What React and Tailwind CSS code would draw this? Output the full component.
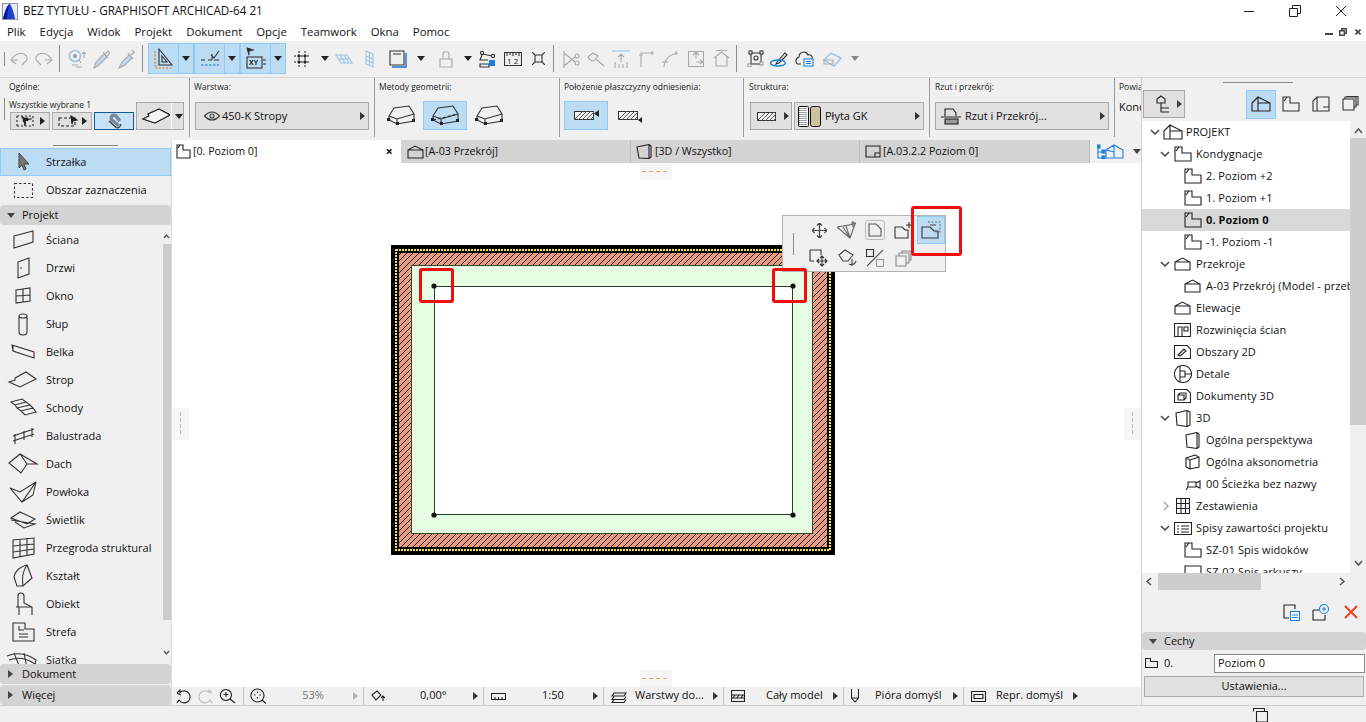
import React from 'react'

const Ico = ({ w, h, c = '#333', sw = 1.1, d, className = '', children }) => (
  <svg width={w} height={h} viewBox={`0 0 ${w} ${h}`} fill="none" stroke={c} strokeWidth={sw} className={`shrink-0 ${className}`}>
    {d && <path d={d} />}
    {children}
  </svg>
)

const CaretR = ({ c = '#333', className = '' }) => (
  <svg width="5" height="8" viewBox="0 0 5 8" className={`shrink-0 ${className}`}><path d="M0 0L5 4L0 8Z" fill={c} /></svg>
)
const CaretD = ({ c = '#333', className = '' }) => (
  <svg width="8" height="5" viewBox="0 0 8 5" className={`shrink-0 ${className}`}><path d="M0 0H8L4 5Z" fill={c} /></svg>
)
const Sep = ({ className = '' }) => <div className={`w-px shrink-0 bg-[#8a8a8a] ${className}`} />

const GRAY = '#a9a9a9'
const LBLUE = '#9cc3e6'

function TopBars() {
  return (
    <>
      <div className="h-[22px] bg-white flex items-center">
        <svg width="16" height="17" viewBox="0 0 16 17" className="ml-[2px] shrink-0">
          <rect x="0" y="0" width="16" height="17" fill="#8d97a8" />
          <rect x="1" y="1" width="14" height="15" fill="#e8ecf4" />
          <path d="M1 16C3 8 5 2 8 1C10 4 12 10 13 16Z" fill="#1f3fd0" />
          <path d="M8 1C6 5 5 11 5 16H1C3 8 5 2 8 1Z" fill="#0a1f8a" />
        </svg>
        <span className="ml-[5px] text-[11.7px] text-[#111]">BEZ TYTUŁU - GRAPHISOFT ARCHICAD-64 21</span>
        <div className="ml-auto flex items-center">
          <div className="w-[10px] h-px bg-[#222]" />
          <Ico w={12} h={12} c="#222" sw={1} className="ml-[35px]" d="M0.5 3.5H8.5V11.5H0.5ZM3.5 3.5V0.5H11.5V8.5H8.5" />
          <Ico w={12} h={12} c="#222" sw={1} className="ml-[34px] mr-[19px]" d="M1 1L11 11M11 1L1 11" />
        </div>
      </div>
      <div className="h-[19px] bg-white flex items-center text-[11.4px] text-[#111] pl-[7px]">
        <span>Plik</span>
        <span className="ml-[14px]">Edycja</span>
        <span className="ml-[14px]">Widok</span>
        <span className="ml-[14px]">Projekt</span>
        <span className="ml-[14px]">Dokument</span>
        <span className="ml-[14px]">Opcje</span>
        <span className="ml-[14px]">Teamwork</span>
        <span className="ml-[14px]">Okna</span>
        <span className="ml-[14px]">Pomoc</span>
        <div className="ml-auto flex items-end mr-[5px]">
          <div className="w-[8px] h-[2px] bg-[#444] mb-px" />
          <Ico w={8} h={8} c="#444" sw={1.4} className="ml-[6px]" d="M0.7 2.7H5.3V7.3H0.7ZM2.7 2V0.7H7.3V5.3H6" />
          <Ico w={6} h={6} c="#444" sw={1.6} className="ml-[8px] mb-px" d="M0.5 0.5L5.5 5.5M5.5 0.5L0.5 5.5" />
        </div>
      </div>
    </>
  )
}

const BlueBtn = ({ children }) => (
  <>
    <div className="w-[31px] h-[31px] bg-[#bcdcf4] border border-[#90c8f6] flex items-center justify-center">{children}</div>
    <div className="w-[15px] h-[31px] bg-[#bcdcf4] border-y border-r border-[#90c8f6] flex items-center justify-center"><CaretD c="#222" /></div>
  </>
)

function Toolbar() {
  return (
    <div className="h-[37px] bg-[#f0f0f0] border-b border-[#d4d4d4] flex items-center pb-px">
      <Sep className="ml-[4px] h-[14px]" />
      <Ico w={18} h={14} c={GRAY} className="ml-[5px]" d="M1 8Q7 -1 14 2Q19 5 16 9L12 13M1 8L6 12M1 8H8" />
      <Ico w={18} h={14} c={GRAY} className="ml-[7px]" d="M17 8Q11 -1 4 2Q-1 5 2 9L6 13M17 8L12 12M17 8H10" />
      <Sep className="ml-[6px] h-[27px]" />
      <Ico w={18} h={20} c={GRAY} className="ml-[8px]" >
        <circle cx="7" cy="7" r="5.5" stroke={LBLUE} strokeWidth="1.6" />
        <circle cx="7" cy="7" r="2" fill="#999" stroke="none" />
        <path d="M11 11L13 14M16 3V9M14 5L16 3L18 5M4 16H10M8 18H14" />
      </Ico>
      <Ico w={17} h={20} c={GRAY} className="ml-[7px]" >
        <path d="M1 19L3 13L11 5L14 8L6 16Z" fill="#c2d8ee" />
        <path d="M10 3L15 9M12 5L15 2L17 4L14 7" />
      </Ico>
      <Ico w={17} h={20} c={GRAY} className="ml-[8px]">
        <path d="M1 19L4 13L11 6L14 9L7 16Z" fill="#c2d8ee" />
        <path d="M10 4L15 10M13 6L16 3M14 1L17 4" />
      </Ico>
      <Sep className="ml-[7px] h-[27px]" />
      <div className="ml-[5px] flex">
        <BlueBtn>
          <Ico w={20} h={24} c="#333">
            <path d="M5 2L18 18H5ZM8 9L13 15H8Z" />
            <path d="M1 4V21H19" stroke="#f07a10" strokeWidth="1.2" strokeDasharray="2 1.5" />
          </Ico>
        </BlueBtn>
        <BlueBtn>
          <Ico w={20} h={20} c="#333">
            <path d="M1 11H5M8 11H12M11 6L14 9L19 2M14 11H19M12 5V11" />
            <path d="M1 16H19" stroke="#1a6fd4" strokeDasharray="2.5 1.5" />
          </Ico>
        </BlueBtn>
        <BlueBtn>
          <Ico w={20} h={24} c="#333">
            <path d="M1 1L7 3L3 4L3 8Z" fill="#222" />
            <rect x="1" y="10" width="15" height="11" />
            <path d="M17 13H20M17 17H20" />
            <text x="3" y="18" fontSize="7" fontWeight="700" fill="#222" stroke="none">XY</text>
          </Ico>
        </BlueBtn>
      </div>
      <Ico w={17} h={18} c="#222" sw={1} className="ml-[7px]">
        <path d="M1 6H3M8 6H10M14 6H16M1 12H3M8 12H10M14 12H16M6 1V3M6 8V10M6 15V17M12 1V3M12 8V10M12 15V17" />
        <circle cx="6" cy="6" r="1.2" fill="#222" /><circle cx="12" cy="6" r="1.2" fill="#222" />
        <circle cx="6" cy="12" r="1.2" fill="#222" /><circle cx="12" cy="12" r="1.2" fill="#222" />
      </Ico>
      <CaretD c="#222" className="ml-[11px]" />
      <Ico w={18} h={10} c={LBLUE} className="ml-[6px]" d="M1 1H12L17 9H6ZM5 1L10 9M9 1L14 9M3 5H14" />
      <Ico w={9} h={18} c={LBLUE} className="ml-[12px]" d="M1 1L8 4V17L1 14ZM4.5 3V16M1 6L8 9M1 10L8 13" />
      <Ico w={18} h={18} c="#333" className="ml-[15px]" >
        <path d="M1 1H15V15H1ZM4 4H12" />
        <path d="M3 17H17V3" stroke="#1a6fd4" strokeWidth="1.4" />
      </Ico>
      <CaretD c="#222" className="ml-[10px]" />
      <Ico w={14} h={18} c={GRAY} className="ml-[14px]" d="M1 9H13V17H1ZM4 9V4C4 1 10 1 10 4V9" />
      <CaretD c="#222" className="ml-[11px]" />
      <Ico w={18} h={18} c="#333" className="ml-[7px]">
        <circle cx="3" cy="3" r="1.6" /><circle cx="14" cy="6" r="1.6" />
        <path d="M4 4L13 6M3 5L1 10H9M1 14H10V17H1Z" />
        <rect x="10" y="10" width="6" height="6" fill="#1a7fe0" stroke="none" />
      </Ico>
      <Ico w={18} h={14} c="#333" className="ml-[7px]" d="M0.5 0.5H17.5V13.5H0.5ZM3 1V4M6 1V3M9 1V4M12 1V3M15 1V4">
        <text x="3" y="12" fontSize="8" fill="#222" stroke="none">1 2</text>
      </Ico>
      <Ico w={13} h={13} c="#333" className="ml-[10px]" d="M3 3H10V10H3ZM0 0L3 3M13 0L10 3M0 13L3 10M13 13L10 10" />
      <Sep className="ml-[8px] h-[27px]" />
      <Ico w={17} h={18} c={GRAY} className="ml-[9px]" >
        <circle cx="14" cy="6" r="2" /><circle cx="14" cy="13" r="2" />
        <path d="M1 3L12 12M1 16L12 7M1 1V18" />
      </Ico>
      <Ico w={18} h={16} c={GRAY} className="ml-[7px]" d="M1 6L6 2L11 5L7 10Q3 10 1 6ZM9 8L17 15" />
      <Ico w={18} h={18} c={GRAY} className="ml-[7px]">
        <path d="M0 1H18" stroke={LBLUE} />
        <path d="M9 4V12M6 7L9 4L12 7M3 12V18M7 14V18M11 14V18M15 12V18" />
      </Ico>
      <Ico w={15} h={16} c={GRAY} className="ml-[9px]" d="M2 16V2H15M13 0V4M0 4H4" />
      <Ico w={18} h={16} c={GRAY} className="ml-[8px]" d="M2 16Q3 4 16 2M14 0V4M0 11H6" />
      <Ico w={16} h={16} c={GRAY} className="ml-[8px]" d="M0.5 0.5H15.5V15.5H0.5ZM8 1V8M5 4L8 1L11 4M8 11H15M12 9L15 11L12 13" />
      <Ico w={17} h={17} c={GRAY} className="ml-[9px]" d="M1 8L8.5 2L16 8M3 7V16H14V7M3 0.5H14" />
      <Sep className="ml-[6px] h-[27px]" />
      <Ico w={17} h={17} c="#333" className="ml-[10px]">
        <path d="M4 3H14V14H4Z" />
        <rect x="2" y="1" width="3" height="3" fill="#fff" /><rect x="13" y="1" width="3" height="3" fill="#fff" />
        <rect x="13" y="12" width="3" height="3" fill="#fff" stroke="#999" /><rect x="1" y="14" width="3" height="3" fill="#fff" stroke="#999" />
        <circle cx="9" cy="8" r="2" />
      </Ico>
      <Ico w={18} h={16} c="#333" className="ml-[6px]">
        <path d="M7 11L15 2L17 4L9 12L6 13Z" />
        <ellipse cx="8" cy="12" rx="7.5" ry="3" stroke="#1a7fe0" strokeWidth="1.4" />
      </Ico>
      <Ico w={19} h={17} c="#333" className="ml-[7px]">
        <path d="M6 14H4C0 14 0 8 4 7C4 2 11 0 13 5C16 4 18 7 17 9" />
        <rect x="9" y="9" width="9" height="7" fill="#fff" stroke="#1a7fe0" />
        <path d="M11 11.5H16M11 13.5H16" stroke="#1a7fe0" />
      </Ico>
      <Ico w={19} h={17} c={GRAY} className="ml-[9px]">
        <path d="M1 10L8 3L18 8L11 16Z" stroke={LBLUE} strokeWidth="1.4" />
        <path d="M1 10H10V14H1Z" />
      </Ico>
      <CaretD c="#888" className="ml-[9px]" />
    </div>
  )
}

const Group = ({ className = '', label, children }) => (
  <div className={`h-[59px] shrink-0 border-r border-[#9a9a9a] ${className}`}>
    <div className="h-[19px] pt-[2px] text-[8.5px] leading-[14px] text-[#222] whitespace-nowrap overflow-hidden">{label}</div>
    {children}
  </div>
)

const GrayBtn = ({ className = '', children }) => (
  <div className={`bg-[#e0e0e0] border border-[#a9a9a9] flex items-center shrink-0 ${className}`}>{children}</div>
)

const Hatch = ({ w, h }) => (
  <svg width={w} height={h} viewBox={`0 0 ${w} ${h}`} className="shrink-0">
    <rect x="0.5" y="0.5" width={w - 1} height={h - 1} fill="#f4f4f4" stroke="#333" />
    <path d={Array.from({ length: Math.ceil((w + h) / 4) }, (_, i) => `M${i * 4} ${h}L${i * 4 + h} 0`).join('')} stroke="#555" strokeWidth="1" />
  </svg>
)

const Box3D = ({ mid }) => (
  <Ico w={28} h={22} c="#333">
    <path d="M2 11L7 3L22 1L27 9V16L10 19L2 15Z" />
    <path d="M2 11L10 14L27 9M10 14V19" />
    {mid && <path d="M2 15L27 9" stroke="#222" strokeDasharray="3 2" />}
    <rect x="0" y="13" width="3" height="3" fill="#222" stroke="none" />
    <rect x="9" y="17" width="3" height="3" fill="#222" stroke="none" />
    <rect x="25" y="14" width="3" height="3" fill="#222" stroke="none" />
  </Ico>
)

function InfoBox() {
  return (
    <div className="h-[62px] flex bg-[#f0f0f0]">
      <Group className="w-[190px] pl-[9px]" label="Ogólne:">
        <div className="flex -ml-[5px]">
          <Sep className="mt-[1px] h-[22px]" />
          <div className="ml-[4px] w-[125px]">
            <div className="h-[15px] text-[8.5px] leading-[15px] whitespace-nowrap text-[#222]">Wszystkie wybrane 1</div>
            <div className="flex ml-px gap-[2px]">
              <GrayBtn className="w-[40px] h-[18px] px-[5px] justify-between">
                <Ico w={24} h={12} c="#222" d="M1 1H17M1 11H17M1 1V11M17 1V11" className="[stroke-dasharray:2_2]">
                  <path d="M6 2L15 4L10 6L9 11Z" fill="#222" />
                </Ico>
                <CaretR c="#222" />
              </GrayBtn>
              <GrayBtn className="w-[40px] h-[18px] px-[5px] justify-between">
                <Ico w={24} h={12} c="#222">
                  <path d="M1 3H17V11H1Z" strokeDasharray="3 2" />
                  <path d="M13 1L19 5L15 6L14 9Z" fill="#222" />
                </Ico>
                <CaretR c="#222" />
              </GrayBtn>
              <div className="w-[40px] h-[18px] bg-[#c6e2f9] border border-[#115a9c] flex items-center justify-center">
                <Ico w={16} h={16} c="#333" sw={1.2}>
                  <path d="M13 13L6 7A2.6 2.6 0 0 1 10 3L14 8" stroke="#7a8796" strokeWidth="3.4" />
                  <path d="M3 8L10 14.5Q14 16 15 11" />
                </Ico>
              </div>
            </div>
          </div>
          <GrayBtn className="ml-[2px] mt-[5px] w-[48px] h-[28px] pl-[5px]">
            <Ico w={28} h={16} c="#222" d="M6 6L17 1L28 7L13 15L1 11L7 8Z">
              <path d="M6 6L17 1L28 7L13 15L1 11L7 8Z" fill="#f5f5f5" />
            </Ico>
            <div className="w-px h-[26px] bg-[#fafafa] ml-[1px] shrink-0" />
            <CaretD c="#222" className="ml-[3px]" />
          </GrayBtn>
        </div>
      </Group>
      <Group className="w-[185px] pl-[4px]" label="Warstwa:">
        <GrayBtn className="mt-[5px] ml-px w-[174px] h-[28px] pl-[8px] pr-[3px] text-[11px] text-[#111]">
          <Ico w={16} h={10} c="#333" d="M0.5 5Q8 -3 15.5 5Q8 13 0.5 5Z"><circle cx="8" cy="5" r="2" /></Ico>
          <span className="ml-[2px]">450-K Stropy</span>
          <CaretR c="#333" className="ml-auto" />
        </GrayBtn>
      </Group>
      <Group className="w-[185px] pl-[4px]" label="Metody geometrii:">
        <div className="mt-[4px] flex items-center">
          <div className="ml-[8px]"><Box3D /></div>
          <div className="ml-[8px] w-[44px] h-[29px] bg-[#bcdcf4] border border-[#90c8f6] flex items-center justify-center"><Box3D mid /></div>
          <div className="ml-[8px]"><Box3D /></div>
        </div>
      </Group>
      <Group className="w-[184px] pl-[4px]" label="Położenie płaszczyzny odniesienia:">
        <div className="mt-[4px] flex items-center">
          <div className="w-[44px] h-[29px] bg-[#bcdcf4] border border-[#90c8f6] flex items-center justify-center pl-px">
            <Hatch w={20} h={9} />
            <svg width="5" height="7" viewBox="0 0 5 7" className="mb-[4px]"><path d="M5 0V7L0 3.5Z" fill="#222" /></svg>
          </div>
          <div className="ml-[10px] flex items-end">
            <Hatch w={20} h={9} />
            <svg width="4" height="6" viewBox="0 0 4 6" className="-mb-[3px]"><path d="M4 0V6L0 3Z" fill="#222" /></svg>
          </div>
        </div>
      </Group>
      <Group className="w-[186px] pl-[5px]" label="Struktura:">
        <div className="mt-[5px] ml-px flex gap-[2px]">
          <GrayBtn className="w-[42px] h-[28px] pl-[6px]">
            <Hatch w={19} h={9} />
            <CaretR c="#333" className="ml-[8px]" />
          </GrayBtn>
          <GrayBtn className="w-[130px] h-[28px] pl-[3px] pr-[3px] text-[11px] text-[#111]">
            <svg width="23" height="21" viewBox="0 0 23 21" className="shrink-0">
              <rect x="0.5" y="0.5" width="10" height="20" rx="1" fill="#fff" stroke="#111" />
              <path d="M2 2V19M4 2V19M6 2V19M8 2V19" stroke="#444" strokeDasharray="1 1" />
              <rect x="12.5" y="0.5" width="10" height="20" rx="2" fill="#c9c3a0" stroke="#111" />
            </svg>
            <span className="ml-[4px]">Płyta GK</span>
            <CaretR c="#333" className="ml-auto" />
          </GrayBtn>
        </div>
      </Group>
      <Group className="w-[185px] pl-[5px]" label="Rzut i przekrój:">
        <GrayBtn className="mt-[5px] w-[174px] h-[28px] pl-[5px] pr-[3px] text-[11px] text-[#111]">
          <Ico w={20} h={17} c="#222">
            <path d="M4 8V1H12L15 5V8M0 9H2M18 9H20M2 9H18" />
            <rect x="4" y="11" width="13" height="5" fill="#999" />
          </Ico>
          <span className="ml-[4px]">Rzut i Przekrój...</span>
          <CaretR c="#333" className="ml-auto" />
        </GrayBtn>
      </Group>
      <div className="flex-1 pl-[4px] overflow-hidden whitespace-nowrap">
        <div className="h-[19px] pt-[2px] text-[8.5px] leading-[14px] text-[#222]">Powiązania</div>
        <div className="text-[11px] leading-[20px] text-[#111]">Kondygnacje</div>
      </div>
    </div>
  )
}

function Tabs() {
  return (
    <div className="h-[23px] bg-[#d3d3d3] flex text-[10.7px] text-[#111] whitespace-nowrap">
      <div className="w-[229px] bg-white flex items-center pl-[4px] pr-[8px]">
        <Ico w={15} h={15} c="#222" d="M1 1H7V6H14V14H1ZM2 4L4 1" />
        <span className="ml-[2px]">[0. Poziom 0]</span>
        <span className="ml-auto text-[13px] font-bold">×</span>
      </div>
      <div className="w-[230px] flex items-center pl-[6px] border-r border-[#bcbcbc]">
        <Ico w={17} h={14} c="#222" d="M1 5L8 1L16 5V13H1ZM1 5H16" />
        <span className="ml-[1px]">[A-03 Przekrój]</span>
      </div>
      <div className="w-[229px] flex items-center pl-[5px] border-r border-[#bcbcbc]">
        <Ico w={16} h={15} c="#222" d="M1 3L13 0.5V14.5L3 14ZM13 0.5L15 2V13L13 14.5" />
        <span className="ml-[3px]">[3D / Wszystko]</span>
      </div>
      <div className="w-[230px] flex items-center pl-[5px] border-r border-[#bcbcbc]">
        <Ico w={16} h={13} c="#222" d="M1 1H15V12H1ZM10 12V8H15" />
        <span className="ml-[2px]">[A.03.2.2 Poziom 0]</span>
      </div>
      <div className="flex-1 bg-[#f0f0f0] flex items-center pl-[7px]">
        <Ico w={27} h={15} c="#1a7fe0">
          <path d="M9 6L17 1L26 6V14H9ZM17 1V14M9 6L17 8" />
          <path d="M1 3V14H7M1 8H7" />
          <rect x="0" y="1" width="3" height="3" fill="#1a7fe0" /><rect x="5" y="6" width="3" height="3" fill="#1a7fe0" /><rect x="5" y="12" width="3" height="3" fill="#1a7fe0" />
        </Ico>
        <CaretD c="#444" className="ml-[9px]" />
      </div>
    </div>
  )
}

const tools = [
  ['Ściana', 'M14 10L33 5V16L14 22Z'],
  ['Drzwi', 'M18 8L29 4V20L18 24ZM20 14H22'],
  ['Okno', 'M16 8L30 6V19L16 21ZM23 7V20M16 14L30 13'],
  ['Słup', 'M19 6V22A4 3 0 0 0 27 22V6M19 6A4 2 0 0 1 27 6A4 2 0 0 1 19 6'],
  ['Belka', 'M12 7L34 14V20L13 13ZM13 8V13M34 14L12 7'],
  ['Strop', 'M15 12L26 6L36 13L20 21L9 16L15 14Z'],
  ['Schody', 'M11 8L22 5L26 8L15 11ZM15 11L17 14L30 11L26 8M17 14L21 17L33 14L30 11M21 17L25 21L36 18L33 14'],
  ['Balustrada', 'M13 14L34 7M13 19L34 12M15 12V22M24 9V18M32 6V15'],
  ['Dach', 'M9 13L20 4L37 14H27L21 23ZM20 4L27 14'],
  ['Powłoka', 'M10 10L22 24L36 4L20 14ZM36 4L33 17L22 24'],
  ['Świetlik', 'M11 12L20 6L35 13L27 18ZM11 14L35 18L24 22L15 16'],
  ['Przegroda struktural', 'M13 6L34 4V20L13 24ZM13 12L34 10M13 18L34 15M20 5V23M27 4V21'],
  ['Kształt', 'M14 15C15 8 22 4 27 3L32 16L23 24L17 24ZM27 3C22 10 22 18 23 24'],
  ['Obiekt', 'M18 17V6Q18 3 21 3Q24 3 24 6V13L32 17V25M16 17H32M19 17V25'],
  ['Strefa', 'M13 5H25V11H34V23H13ZM19 8V12H24M19 16H28M19 19H28'],
  ['Siatka', 'M7 10Q22 4 36 14L34 24M14 7L20 22M24 7L27 22M9 14Q22 9 35 18'],
]

const PanelHeader = ({ label, open, className = '' }) => (
  <div className={`h-[20px] bg-[#d3d3d3] rounded-[4px] flex items-center pl-[7px] text-[11px] text-[#111] ${className}`}>
    {open ? <CaretD c="#444" /> : <CaretR c="#444" className="ml-px" />}
    <span className={open ? 'ml-[7px]' : 'ml-[9px]'}>{label}</span>
  </div>
)

function ToolboxPanel() {
  return (
    <div className="w-[172px] h-[565px] shrink-0 bg-[#f0f0f0] border-r border-[#dcdcdc] flex flex-col text-[11px] text-[#111]">
      <div className="h-[8px] flex items-start justify-center pt-[5px]">
        <div className="w-[65px] h-px bg-[#8a8a8a]" />
      </div>
      <div className="h-[28px] bg-[#bcdcf4] border border-[#90c8f6] flex items-center">
        <svg width="39" height="26" viewBox="0 0 39 26" className="shrink-0">
          <path d="M18 4V19L21 16L23 21L25 20L23 15L28 15Z" fill="#777" stroke="#444" />
        </svg>
        <span className="ml-[6px]">Strzałka</span>
      </div>
      <div className="h-[28px] flex items-center">
        <Ico w={40} h={28} c="#333" d="M14.5 7.5H32.5V21.5H14.5Z" className="[stroke-dasharray:2.5_2]" />
        <span className="ml-[6px]">Obszar zaznaczenia</span>
      </div>
      <PanelHeader label="Projekt" open className="mt-px" />
      <div className="h-[438px] flex overflow-hidden mt-px">
        <div className="w-[162px] shrink-0 overflow-hidden whitespace-nowrap">
          {tools.map(([label, d]) => (
            <div key={label} className="h-[28px] flex items-center">
              <Ico w={40} h={28} c="#333" d={d} />
              <span className="ml-[6px]">{label}</span>
            </div>
          ))}
        </div>
        <div className="w-[9px] flex flex-col items-center">
          <svg width="7" height="18" viewBox="0 0 7 18" className="shrink-0"><path d="M1 12L3.5 9L6 12" fill="none" stroke="#555" strokeWidth="1.4" /></svg>
          <div className="w-[8px] h-[376px] bg-[#cdcdcd]" />
          <svg width="7" height="44" viewBox="0 0 7 44" className="shrink-0"><path d="M1 31L3.5 34L6 31" fill="none" stroke="#555" strokeWidth="1.4" /></svg>
        </div>
      </div>
      <PanelHeader label="Dokument" />
      <PanelHeader label="Więcej" className="mt-px" />
    </div>
  )
}

const StatusCell = ({ icon, text, textClass = '' }) => (
  <div className="w-[120px] h-full border-r border-[#c4c4c4] flex items-center shrink-0">
    <div className="w-[30px] pl-[7px] shrink-0">{icon}</div>
    <span className={`flex-1 whitespace-nowrap pb-[2px] ${textClass}`}>{text}</span>
    <CaretR c="#333" className="mr-[5px]" />
  </div>
)

function StatusBar() {
  return (
    <div className="h-[18px] bg-[#f0f0f0] flex items-center text-[11px] text-[#111]">
      <div className="w-[72px] h-full border-r border-[#c4c4c4] flex items-center pl-[3px] shrink-0">
        <Ico w={17} h={16} c="#222" d="M2 5L5 2V4.5A6 6 0 1 1 4 12L2 15M2 5L6 7" />
        <Ico w={17} h={16} c="#bbb" className="ml-[5px]" d="M15 5L12 2V4.5A6 6 0 1 0 13 12L15 15" />
        <Ico w={17} h={16} c="#222" className="ml-[5px]" d="M11 11L16 15M7 1.5A5.5 5.5 0 1 1 6.9 1.5ZM7 4V9M4.5 6.5H9.5" />
      </div>
      <div className="w-[120px] h-full border-r border-[#c4c4c4] flex items-center pl-[6px] shrink-0">
        <Ico w={17} h={16} c="#222" d="M12 12L16 15.5M7.5 1A6.5 6.5 0 1 1 7.4 1ZM7.5 3.5V5M7.5 9V10.5M4 7H5.5M9.5 7H11" />
        <span className="flex-1 text-center text-[#777] pl-[6px] pb-[2px]">53%</span>
        <CaretR c="#b0b0b0" className="mr-[5px]" />
      </div>
      <StatusCell textClass="pl-[26px]" icon={<Ico w={14} h={12} c="#222" d="M1 5L6 1L10 5L5 10ZM12 11V6M10 8L12 6L14 8" />} text="0,00°" />
      <StatusCell textClass="pl-[28px]" icon={<Ico w={15} h={7} c="#222" d="M0.5 0.5H14.5V6.5H0.5ZM4 4V6M7.5 4V6M11 4V6" />} text="1:50" />
      <StatusCell textClass="pl-px" icon={<Ico w={16} h={13} c="#222" d="M3 3H15L13 6H1ZM3 6.5L1 9.5H13L15 6.5M3 9.5L1 12.5H13L15 9.5" />} text="Warstwy do..." />
      <StatusCell textClass="pl-[12px]" icon={<Ico w={14} h={12} c="#222" d="M0.5 0.5H13.5V11.5H0.5ZM1 5H13M1 8H13M4 5L2 8M8 5L6 8M12 5L10 8" />} text="Cały model" />
      <StatusCell textClass="pl-px" icon={<Ico w={8} h={14} c="#222" d="M0.5 0V9L4 13L7.5 9V0M0.5 9H7.5" />} text="Pióra domyśl" />
      <div className="flex-1 h-full flex items-center pl-[7px]">
        <Ico w={15} h={11} c="#222" d="M0.5 0.5H14.5V10.5H0.5ZM3 3.5H12V7.5H3Z" />
        <span className="ml-[10px] whitespace-nowrap pb-[2px]">Repr. domyśl</span>
        <CaretR c="#333" className="ml-[10px]" />
      </div>
    </div>
  )
}

const EdgeTab = ({ className = '', vertical }) => (
  <div className={`absolute bg-[#f5f5f5] flex items-center justify-center ${className}`}>
    {vertical
      ? <svg width="1" height="24" viewBox="0 0 1 24"><path d="M0.5 0V24" stroke="#bdbdbd" strokeDasharray="4 2" /></svg>
      : <svg width="28" height="1" viewBox="0 0 28 1"><path d="M0 0.5H28" stroke="#f7a468" strokeDasharray="4 3" /></svg>}
  </div>
)

const RedBox = ({ className = '' }) => (
  <div className={`absolute border-[3px] border-[#f10d0d] rounded-[3px] ${className}`} />
)

function Slab() {
  return (
    <svg width="444" height="310" viewBox="0 0 444 310" className="absolute left-[219px] top-[82px]" shapeRendering="crispEdges">
      <defs>
        <pattern id="hatch" width="6" height="6" patternUnits="userSpaceOnUse">
          <rect width="6" height="6" fill="#ea9c82" />
          <path d="M0 6L6 0" stroke="#1a1a1a" strokeWidth="1" />
        </pattern>
      </defs>
      <rect width="444" height="310" fill="#000" />
      <rect x="5" y="5" width="434" height="300" fill="none" stroke="#f6e84a" strokeWidth="2" strokeDasharray="2 1" />
      <rect x="8" y="8" width="428" height="294" fill="url(#hatch)" />
      <rect x="20.5" y="20.5" width="401" height="268" fill="#e6fde4" stroke="#2c4a30" />
      <rect x="43.5" y="41.5" width="358" height="228" fill="#fff" stroke="#23402a" />
      <g shapeRendering="auto" fill="#111">
        <circle cx="43" cy="41" r="2.6" />
        <circle cx="402" cy="41" r="2.6" />
        <circle cx="43" cy="270" r="2.6" />
        <circle cx="402" cy="270" r="2.6" />
      </g>
    </svg>
  )
}

function Palette() {
  const c = '#444'
  return (
    <div className="absolute left-[610px] top-[52px] w-[164px] h-[57px] bg-[#f0f0f0] border border-[#b4b4b4] flex">
      <div className="w-[22px] shrink-0 pl-[10px] pt-[17px]"><Sep className="h-[22px]" /></div>
      <div className="grid grid-cols-[28px_28px_28px_28px_28px] grid-rows-[28px_28px]">
        <div className="flex items-center justify-center">
          <Ico w={15} h={15} c={c} sw={1.2} d="M7.5 0V15M0 7.5H15M5 2.5L7.5 0L10 2.5M5 12.5L7.5 15L10 12.5M2.5 5L0 7.5L2.5 10M12.5 5L15 7.5L12.5 10" />
        </div>
        <div className="flex items-center justify-center">
          <Ico w={20} h={18} c="#666" d="M0 6L18 3L13 17ZM6 6L13 17M9 5L13 17M16 0V6M14 2H19" />
        </div>
        <div className="flex items-center justify-center">
          <div className="w-[20px] h-[20px] rounded-[3px] border border-[#bbb] flex items-center justify-center">
            <Ico w={14} h={14} c="#555" d="M1 1H8L13 6V13H1Z" />
          </div>
        </div>
        <div className="flex items-center justify-center">
          <Ico w={19} h={18} c="#333" d="M1 6H8L11 9H14V17H1ZM15 1V7M12 4H18" />
        </div>
        <div className="bg-[#bcdcf4] border border-[#90c8f6] flex items-center justify-center">
          <Ico w={20} h={18} c="#333">
            <path d="M7 1H19V11H14" stroke="#777" strokeDasharray="2 1.5" />
            <path d="M9 4H15" stroke="#555" />
            <path d="M1 6H9L13 10H17V17H1Z" />
          </Ico>
        </div>
        <div className="flex items-center justify-center">
          <Ico w={20} h={18} c="#333" d="M1 1H12V6M1 1V12H5M13 7V17M8 12H18M11 9L13 7L15 9M11 15L13 17L15 15M10 10L8 12L10 14M16 10L18 12L16 14" />
        </div>
        <div className="flex items-center justify-center">
          <Ico w={19} h={18} c="#444" d="M1 6L7 1L15 6L10 12H5ZM14 10V17M11 15Q16 17 18 12" />
        </div>
        <div className="flex items-center justify-center">
          <Ico w={18} h={18} c="#555">
            <rect x="0.5" y="0.5" width="7" height="7" stroke="#333" />
            <rect x="10.5" y="10.5" width="7" height="7" stroke="#999" />
            <path d="M1 17L17 1" />
          </Ico>
        </div>
        <div className="flex items-center justify-center">
          <Ico w={17} h={17} c="#888" d="M1 6H11V16H1ZM4 6V3H14V13H11M7 3V1H16V10H14" />
        </div>
      </div>
    </div>
  )
}

function Canvas() {
  return (
    <div className="h-[524px] bg-white relative overflow-hidden">
      <EdgeTab className="left-[468px] top-0 w-[32px] h-[16px]" />
      <EdgeTab className="left-[468px] bottom-0 w-[32px] h-[17px]" />
      <EdgeTab vertical className="left-0 top-[245px] w-[17px] h-[32px]" />
      <EdgeTab vertical className="right-0 top-[245px] w-[17px] h-[32px]" />
      <Slab />
      <Palette />
      <RedBox className="left-[247px] top-[105px] w-[35px] h-[35px]" />
      <RedBox className="left-[600px] top-[105px] w-[35px] h-[35px]" />
      <RedBox className="left-[739px] top-[43px] w-[51px] h-[50px]" />
    </div>
  )
}

const I = {
  project: <Ico w={20} h={16} c="#222" d="M1 7L7 1L19 7V15H1ZM7 1V15M7 7H19" />,
  storey: <Ico w={18} h={16} c="#222" d="M1 1H8V7H17V15H1ZM2 5L5 1" />,
  section: <Ico w={17} h={14} c="#222" d="M1 5L8.5 1L16 5V13H1ZM1 5H16" />,
  sheet: <Ico w={18} h={14} c="#222" d="M1 1H17V13H1Z" />,
  unfold: <Ico w={17} h={14} c="#222" d="M0.5 0.5H16.5V13.5H0.5ZM4 13V4H8V13M10 4H14V8H10Z" />,
  d2: <Ico w={17} h={14} c="#222" d="M0.5 0.5H13L16.5 4V13.5H0.5ZM4 10L10 4L12 6L6 11Z" />,
  detail: <Ico w={18} h={18} c="#222" d="M9 0.5A8.5 8.5 0 1 1 8.9 0.5ZM6 1V17M6 6H11V12H6M11 9H17" />,
  d3doc: <Ico w={17} h={14} c="#222" d="M0.5 0.5H13L16.5 4V13.5H0.5ZM4 6H10V11H4ZM4 6L6 4H12V9L10 11" />,
  view3d: <Ico w={16} h={17} c="#222" d="M1 3L12 0.5V16.5L2 15ZM12 0.5L15 2V15L12 16.5" />,
  persp: <Ico w={15} h={17} c="#222" d="M1 3L12 0.5V16.5L2 15ZM12 0.5L14 2V15L12 16.5" />,
  axo: <Ico w={15} h={16} c="#222" d="M1 4L10 1L14 3V13L5 15L1 13ZM1 4L5 6L14 3M5 6V15" />,
  path: <Ico w={16} h={13} c="#222" d="M3 4H11V9H3ZM11 5L15 3V10L11 8M3 9L1 12" />,
  sched: <Ico w={14} h={16} c="#222" d="M0.5 0.5H13.5V15.5H0.5ZM0.5 5.5H13.5M0.5 10.5H13.5M5 1V15M9.5 1V15" />,
  toc: <Ico w={18} h={13} c="#222" d="M0.5 0.5H17.5V12.5H0.5ZM7 4H15M7 7H15M7 10H15M3 4H5M3 7H5M3 10H5" />,
}

const tree = [
  [0, 'v', 'project', 'PROJEKT'],
  [1, 'v', 'storey', 'Kondygnacje'],
  [2, '', 'storey', '2. Poziom +2'],
  [2, '', 'storey', '1. Poziom +1'],
  [2, '', 'storey', '0. Poziom 0', true],
  [2, '', 'storey', '-1. Poziom -1'],
  [1, 'v', 'section', 'Przekroje'],
  [2, '', 'section', 'A-03 Przekrój (Model - przeb'],
  [1, '', 'section', 'Elewacje'],
  [1, '', 'unfold', 'Rozwinięcia ścian'],
  [1, '', 'd2', 'Obszary 2D'],
  [1, '', 'detail', 'Detale'],
  [1, '', 'd3doc', 'Dokumenty 3D'],
  [1, 'v', 'view3d', '3D'],
  [2, '', 'persp', 'Ogólna perspektywa'],
  [2, '', 'axo', 'Ogólna aksonometria'],
  [2, '', 'path', '00 Ścieżka bez nazwy'],
  [1, '>', 'sched', 'Zestawienia'],
  [1, 'v', 'toc', 'Spisy zawartości projektu'],
  [2, '', 'storey', 'SZ-01 Spis widoków'],
  [2, '', 'sheet', 'SZ-02 Spis arkuszy'],
]

const LEVEL = { 0: 'w-[20px]', 1: 'w-[30px]', 2: 'w-[40px]' }

function TreeRow({ level, arrow, icon, label, active }) {
  return (
    <div className={`h-[22px] flex items-center whitespace-nowrap ${active ? 'bg-[#d9d9d9] font-bold' : ''}`}>
      <div className={`${LEVEL[level]} shrink-0 flex justify-end pr-[2px]`}>
        {arrow === 'v' && <Ico w={10} h={7} c="#444" sw={1.5} d="M1 1L5 5L9 1" />}
        {arrow === '>' && <Ico w={7} h={10} c="#aaa" sw={1.5} d="M1 1L5 5L1 9" />}
      </div>
      <div className="w-[21px] shrink-0 flex justify-center">{I[icon]}</div>
      <span className="ml-[3px] tracking-[0.1px]">{label}</span>
    </div>
  )
}

function Navigator() {
  return (
    <div className="w-[225px] h-[627px] shrink-0 bg-[#f0f0f0] border-l border-[#d0d0d0] flex flex-col text-[11px] text-[#111]">
      <div className="h-[12px] flex justify-center pt-[4px] pl-[8px]">
        <div className="w-[70px] h-px bg-[#8a8a8a]" />
      </div>
      <div className="h-[28px] flex items-center">
        <GrayBtn className="ml-px w-[42px] h-[28px] pl-[10px] gap-[8px]">
          <Ico w={15} h={18} c="#222" d="M3 4L7 1L11 4V8H3ZM7 8V17H15M7 13H15" />
          <CaretR c="#444" />
        </GrayBtn>
        <div className="ml-[61px] w-[30px] h-[29px] bg-[#bcdcf4] border border-[#90c8f6] flex items-center justify-center">
          <Ico w={20} h={16} c="#222" d="M1 7L7 1L19 7V15H1ZM7 1V15M7 7H19" />
        </div>
        <Ico w={18} h={16} c="#333" className="ml-[6px]" d="M1 1H8V7H17V15H1ZM2 5L5 1" />
        <Ico w={18} h={16} c="#333" className="ml-[12px]" d="M1 5L5 1H17V15H1ZM5 1V15M11 11H17" />
        <Ico w={17} h={17} c="#333" className="ml-[12px]" d="M1 3H12V14H1ZM3 3V1H14V11H12M5 1V0.5H16V9H14" />
      </div>
      <div className="h-[452px] mt-[3px] flex">
        <div className="w-[208px] bg-white overflow-hidden">
          {tree.map(([level, arrow, icon, label, active]) => (
            <TreeRow key={label} level={level} arrow={arrow} icon={icon} label={label} active={active} />
          ))}
        </div>
        <div className="w-[16px] flex flex-col items-center">
          <svg width="9" height="17" viewBox="0 0 9 17" className="shrink-0"><path d="M1 12L4.5 8L8 12" fill="none" stroke="#555" strokeWidth="1.5" /></svg>
          <div className="w-full h-[287px] bg-[#cdcdcd] shrink-0" />
          <div className="flex-1" />
          <svg width="9" height="14" viewBox="0 0 9 14" className="shrink-0"><path d="M1 2L4.5 6L8 2" fill="none" stroke="#555" strokeWidth="1.5" /></svg>
        </div>
      </div>
      <div className="h-[17px] w-[208px] flex items-center shrink-0">
        <Ico w={16} h={9} c="#555" sw={1.5} d="M9 1L5 4.5L9 8" />
        <div className="w-[103px] h-full bg-[#cdcdcd]" />
        <div className="flex-1" />
        <Ico w={16} h={9} c="#555" sw={1.5} d="M6 1L10 4.5L6 8" />
      </div>
      <div className="h-[42px] flex items-center pl-[141px] pt-[2px] shrink-0">
        <Ico w={17} h={17} c="#222">
          <path d="M6 14H1V1H12V5" />
          <rect x="7.5" y="7.5" width="9" height="9" fill="#fff" stroke="#1a7fe0" />
          <path d="M9 11H15M9 13.5H15" stroke="#1a7fe0" />
        </Ico>
        <Ico w={18} h={17} c="#222" className="ml-[12px]">
          <path d="M1 6H7M1 6V16H13V11" />
          <circle cx="12" cy="5" r="4.5" stroke="#1a7fe0" />
          <path d="M12 3V7M10 5H14" stroke="#1a7fe0" />
        </Ico>
        <Ico w={14} h={14} c="#f0401c" sw={2} className="ml-[14px]" d="M1 1L13 13M13 1L1 13" />
      </div>
      <div className="h-[18px] bg-[#d3d3d3] rounded-[4px] flex items-center pl-[7px] shrink-0">
        <CaretD c="#444" />
        <span className="ml-[7px]">Cechy</span>
      </div>
      <div className="h-[26px] flex items-center pl-[3px] shrink-0">
        <Ico w={13} h={10} c="#222" d="M0.5 0.5H5.5V3.5H12.5V9.5H0.5Z" />
        <span className="ml-[6px] w-[50px]">0.</span>
        <div className="w-[151px] h-[19px] bg-white border border-[#8a8a8a] flex items-center pl-[3px]">Poziom 0</div>
      </div>
      <GrayBtn className="mx-[2px] h-[21px] justify-center">Ustawienia...</GrayBtn>
    </div>
  )
}

export default function App() {
  return (
    <div className="w-[1366px] h-[722px] overflow-hidden bg-[#f0f0f0] [font-family:'Open_Sans',sans-serif] select-none">
      <TopBars />
      <Toolbar />
      <div className="h-[627px] flex">
        <div className="w-[1141px] shrink-0 flex flex-col">
          <InfoBox />
          <div className="flex">
            <ToolboxPanel />
            <div className="flex-1 flex flex-col min-w-0">
              <Tabs />
              <Canvas />
              <StatusBar />
            </div>
          </div>
        </div>
        <Navigator />
      </div>
      <div className="h-[17px] border-t border-[#d0d0d0] pl-[1253px] pt-[2px]">
        <Ico w={15} h={14} c="#222" d="M0.5 3.5V0.5H11.5V3M3.5 3.5H14.5V14H3.5Z" />
      </div>
    </div>
  )
}
